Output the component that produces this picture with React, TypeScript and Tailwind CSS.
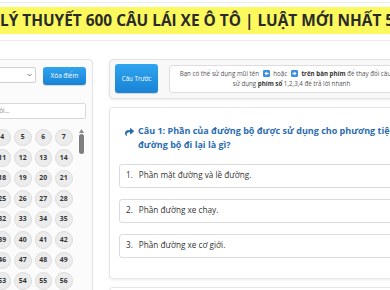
import React from "react";

function ArrowKey({ dir }: { dir: "left" | "right" }) {
  return (
    <svg width="7" height="7" viewBox="0 0 14 14" className="inline-block align-[-0.5px] mx-[2px]">
      <rect x="0" y="0" width="14" height="14" rx="2.5" fill="#3b8fe0" />
      {dir === "left" ? (
        <path d="M3 7 L7 3.2 V5.6 H11 V8.4 H7 V10.8 Z" fill="#fff" />
      ) : (
        <path d="M11 7 L7 3.2 V5.6 H3 V8.4 H7 V10.8 Z" fill="#fff" />
      )}
    </svg>
  );
}

export default function App() {
  const rows = Array.from({ length: 8 }, (_, r) => Array.from({ length: 7 }, (_, c) => r * 7 + c + 1));
  const answers = ["Phần mặt đường và lề đường.", "Phần đường xe chạy.", "Phần đường xe cơ giới."];
  return (
    <div className="w-[390px] h-[290px] overflow-hidden bg-white font-['Open_Sans',sans-serif] text-[#333]">
      <div className="h-[3px] border-b border-[#ebebeb]" />
      <div className="mt-[4px] h-[27px] bg-[#fbf95e] flex items-center whitespace-nowrap overflow-hidden">
        <span className="font-bold text-[15.4px] text-[#2a2a2a] leading-none pt-[1px]">
          LÝ THUYẾT 600 CÂU LÁI XE Ô TÔ | LUẬT MỚI NHẤT 5/2025
        </span>
      </div>
      <div className="mt-[6px] border-t border-[#ececec]" />

      <div className="flex items-start ml-[-76px] mt-[18px] gap-[16px]">
        {/* Left panel */}
        <div className="w-[169px] shrink-0 h-[260px] bg-[#fbfbfb] border border-[#e3e3e3] rounded-[4px] shadow-[0_1px_2px_rgba(0,0,0,0.06)] pt-[7px] pl-[7px] pr-[6px]">
          <div className="flex items-start gap-[7px]">
            <div className="flex-1 h-[16px] bg-white border border-[#cfcfcf] rounded-[2px] flex items-center justify-end pr-[3px]">
              <svg width="5" height="4" viewBox="0 0 10 6">
                <path d="M1 1 L5 5 L9 1" stroke="#555" strokeWidth="1.5" fill="none" />
              </svg>
            </div>
            <div className="w-[43px] h-[18px] rounded-[3px] bg-gradient-to-b from-[#2fa4ef] to-[#1983d6] text-white text-[6.4px] flex items-center justify-center shadow-[0_1px_1px_rgba(0,0,0,0.15)]">
              Xóa điểm
            </div>
          </div>
          <div className="mt-[18px] h-[16px] bg-white border border-[#d9d9d9] rounded-[2px] flex items-center pl-[6px] text-[6.4px] text-[#8a8a8a] whitespace-nowrap overflow-hidden">
            Tìm kiếm theo câu hỏi...
          </div>
          <div className="mt-[9.5px] flex items-start">
            <div className="grid grid-cols-[repeat(7,17.5px)] gap-[3px]">
              {rows.flat().map((n) => (
                <div
                  key={n}
                  className="w-[17.5px] h-[17.5px] rounded-full bg-[#ececec] border border-[#dddddd] flex items-center justify-center text-[6.8px] font-bold text-[#333]"
                >
                  {n}
                </div>
              ))}
            </div>
            <div className="ml-auto w-[9px] flex flex-col items-center">
              <svg width="5" height="4" viewBox="0 0 10 8">
                <path d="M5 0 L10 8 H0 Z" fill="#8a8a8a" />
              </svg>
              <div className="mt-[1px] w-[5px] h-[20px] rounded-[3px] bg-[#7e7e7e]" />
            </div>
          </div>
        </div>

        {/* Right column */}
        <div className="w-[365px] shrink-0 flex flex-col gap-[8px]">
          <div className="h-[40px] bg-[#f8f8f8] border border-[#e3e3e3] rounded-[4px] shadow-[0_1px_3px_rgba(0,0,0,0.08)] flex items-start pt-[4px] pl-[5px] pr-[5px] gap-[11px]">
            <div className="w-[43px] h-[29px] shrink-0 rounded-[3px] bg-gradient-to-b from-[#2fa4ef] to-[#1983d6] text-white text-[6.2px] flex items-center justify-center shadow-[0_1px_1px_rgba(0,0,0,0.15)]">
              Câu Trước
            </div>
            <div className="mt-[1px] flex-1 h-[28px] bg-white border border-[#dedede] rounded-[3px] flex flex-col items-center justify-center text-[6.2px] leading-[10px] text-[#555] whitespace-nowrap">
              <div>
                Bạn có thể sử dụng mũi tên <ArrowKey dir="left" /> hoặc <ArrowKey dir="right" />{" "}
                <b className="text-[#333]">trên bàn phím</b> để thay đổi câu hỏi,
              </div>
              <div>
                sử dụng <b className="text-[#333]">phím số</b> 1,2,3,4 để trả lời nhanh
              </div>
            </div>
            <div className="w-[43px] h-[29px] shrink-0 rounded-[3px] bg-gradient-to-b from-[#2fa4ef] to-[#1983d6] text-white text-[6.2px] flex items-center justify-center">
              Câu Tiếp
            </div>
          </div>

          <div className="h-[172px] bg-white border border-[#e6e6e6] rounded-[4px] shadow-[0_1px_3px_rgba(0,0,0,0.08)] pt-[16px] px-[9px]">
            <div className="flex items-start pl-[6px] text-[#2b6cb0] font-bold text-[9px] leading-[14.3px]">
              <svg width="9" height="8" viewBox="0 0 512 448" className="mt-[3.5px] mr-[4px] shrink-0">
                <path
                  fill="#2b6cb0"
                  d="M503.7 189.8L327.7 37.9C312.3 24.6 288 35.4 288 56v80.1C127.4 137.9 0 170.1 0 322.3c0 61.4 39.6 122.3 83.3 154.1 13.7 9.9 33.1-2.5 28.1-18.6C66.1 312.8 132.9 274.3 288 272.1V360c0 20.7 24.3 31.5 39.7 18.2l176-152c11.1-9.6 11.1-26.8 0-36.4z"
                  transform="translate(0,-32)"
                />
              </svg>
              <div className="whitespace-nowrap">
                <div>Câu 1: Phần của đường bộ được sử dụng cho phương tiện giao thông</div>
                <div>đường bộ đi lại là gì?</div>
              </div>
            </div>
            <div className="mt-[11px] flex flex-col gap-[11px]">
              {answers.map((a, i) => (
                <div
                  key={i}
                  className="h-[24px] bg-white border border-[#dcdcdc] rounded-[3px] flex items-center pl-[6px] text-[8.2px] text-[#333] whitespace-nowrap"
                >
                  <span>{i + 1}.</span>
                  <span className="ml-[6px]">{a}</span>
                </div>
              ))}
            </div>
          </div>

          <div className="h-[40px] bg-white border border-[#e6e6e6] rounded-[4px] shadow-[0_1px_3px_rgba(0,0,0,0.08)]" />
        </div>
      </div>
    </div>
  );
}
